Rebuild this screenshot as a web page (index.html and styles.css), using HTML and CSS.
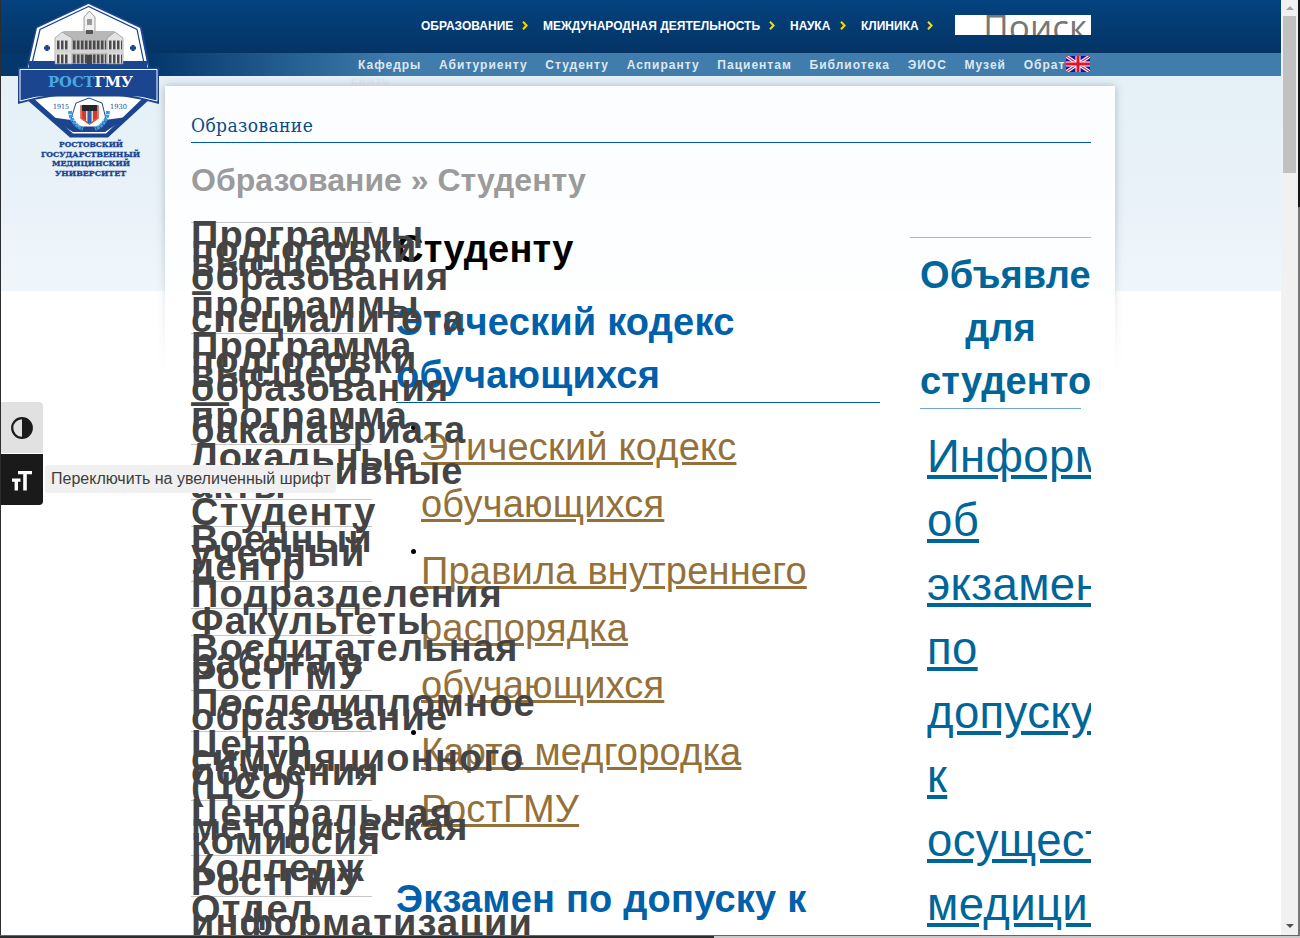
FILE: index.html
```html
<!DOCTYPE html>
<html lang="ru">
<head>
<meta charset="utf-8">
<title>Студенту</title>
<link rel="stylesheet" href="styles.css">
</head>
<body>
<div class="window">
  <div class="view">
    <header class="header">
      <nav class="primary">
        <a class="p1">ОБРАЗОВАНИЕ</a><svg class="chev" viewBox="0 0 6 9"><path d="M1 .7 4.6 4.5 1 8.3"/></svg>
        <a class="p2">МЕЖДУНАРОДНАЯ ДЕЯТЕЛЬНОСТЬ</a><svg class="chev" viewBox="0 0 6 9"><path d="M1 .7 4.6 4.5 1 8.3"/></svg>
        <a class="p3">НАУКА</a><svg class="chev" viewBox="0 0 6 9"><path d="M1 .7 4.6 4.5 1 8.3"/></svg>
        <a class="p4">КЛИНИКА</a><svg class="chev" viewBox="0 0 6 9"><path d="M1 .7 4.6 4.5 1 8.3"/></svg>
      </nav>
      <div class="search"><span>Поиск</span></div>
    </header>
    <div class="strip">
      <nav class="secondary">
        <a>Кафедры</a><a>Абитуриенту</a><a>Студенту</a><a>Аспиранту</a><a>Пациентам</a><a>Библиотека</a><a>ЭИОС</a><a>Музей</a><a>Обрат</a>
      </nav>
      <svg class="flag" viewBox="0 0 24 16"><rect width="24" height="16" fill="#1212a8"/><path d="M0 0 24 16M24 0 0 16" stroke="#fff" stroke-width="3.4"/><path d="M0 0 24 16M24 0 0 16" stroke="#e2203c" stroke-width="1.2"/><path d="M12 0V16M0 8H24" stroke="#fff" stroke-width="5"/><path d="M12 0V16M0 8H24" stroke="#e4102c" stroke-width="3"/></svg>
    </div>
    <div class="wrapped">связь</div>
    <svg class="logo" viewBox="0 0 144 180">
      <path d="M72.500 2 20 27 10 68H134L126 27Z" fill="#1b458f"/>
      <path d="M72.500 4 21 28 12 68H132L124 28Z" fill="#fff"/>
      <path d="M72.500 6.500 24 29.500 15 68H129L121 29.500Z" fill="#fff" stroke="#1b458f" stroke-width="1.200"/>
      <path d="M13 61H131V68H13Z" fill="#1b458f"/>
      <g>
        <path d="M68 17 73.500 11 79 17V33H68Z" fill="#f0f0f0" stroke="#777" stroke-width=".7"/>
        <path d="M71 19H76V25H71Z" fill="#999"/>
        <path d="M39 38 48 31H98L107 38V64H39Z" fill="#b8b8b8"/>
        <path d="M39 38 46 32 56 38V64H39ZM91 38 99 32 107 38V64H91Z" fill="#e2e2e2" stroke="#888" stroke-width=".6"/>
        <path d="M70 34H77V30H70Z" fill="#555"/>
        <path d="M41 45H52M57 45H90M93 45H106M41 59H52M57 59H90M93 59H106" stroke="#4b4b4b" stroke-width="9" stroke-dasharray="2.500 1.500"/>
        <path d="M39 51.500H107" stroke="#d4d4d4" stroke-width="3.500"/>
        <path d="M71 55H76V64H71Z" fill="#444"/>
        <path d="M31 45v6M28 48h6M117 45v6M114 48h6" stroke="#1b458f" stroke-width="3"/>
      </g>
      <path d="M9 98H135L92 137.500H54Z" fill="#1b458f"/>
      <path d="M16 97Q72 90 128 97L90 133.500H57Z" fill="#fff"/>
      <path d="M33 117Q72 124 111 117L89 132H57Z" fill="#1b458f"/>
      <path d="M73 98 60 103 55 119 62 127H83L90 119 86 103Z" fill="#fff" stroke="#1b458f"/>
      <path d="M54 111q1 13 13 18M92 111q-1 13-13 18" fill="none" stroke="#3f9bdc" stroke-width="4" stroke-dasharray="3 .7"/>
      <path d="M65 106H82V118L73.500 124 65 118Z" fill="#f0d8c8" stroke="#e05038" stroke-width="1.500"/>
      <path d="M66 105h15v6H66Z" fill="#252530"/><path d="M66 111h4v10l-4-3Z M77 111h4v7l-4 3Z" fill="#d43b2c"/><path d="M71.500 111h4v12h-4Z" fill="#2b62b3"/>
      <path d="M2 67.500H143V104Q72 84 2 104Z" fill="#1b458f"/>
      <path d="M4 69.500H141V101Q72 82 4 101Z" fill="none" stroke="#fff"/>
      <path d="M5 70H140V96.500H5Z" fill="#1b458f"/>
      <text x="32" y="87" class="brand" textLength="85" lengthAdjust="spacingAndGlyphs"><tspan fill="#48a8e4">РОСТ</tspan><tspan fill="#fff">ГМУ</tspan></text>
      <g class="years"><text x="37" y="109" textLength="16" lengthAdjust="spacingAndGlyphs">1915</text><text x="94" y="109" textLength="17" lengthAdjust="spacingAndGlyphs">1930</text></g>
      <g class="uni">
        <text x="43" y="146.500" textLength="64" lengthAdjust="spacingAndGlyphs">РОСТОВСКИЙ</text>
        <text x="25" y="156.500" textLength="99" lengthAdjust="spacingAndGlyphs">ГОСУДАРСТВЕННЫЙ</text>
        <text x="36" y="166" textLength="78" lengthAdjust="spacingAndGlyphs">МЕДИЦИНСКИЙ</text>
        <text x="39" y="176" textLength="71" lengthAdjust="spacingAndGlyphs">УНИВЕРСИТЕТ</text>
      </g>
    </svg>
    <div class="shade"></div>
    <main class="card">
      <div class="section">Образование</div>
      <div class="crumbs">Образование » Студенту</div>
      <div class="columns">
        <ul class="menu">
          <li>Программы<br>подготовки<br>высшего<br>образования<br>–<br>программы<br>специалитета</li>
          <li>Программа<br>подготовки<br>высшего<br>образования<br>—<br>программа<br>бакалавриата</li>
          <li>Локальные<br>нормативные<br>акты</li>
          <li>Студенту</li>
          <li>Военный<br>учебный<br>центр</li>
          <li>Подразделения</li>
          <li>Факультеты</li>
          <li>Воспитательная<br>работа в<br>РостГМУ</li>
          <li>Последипломное<br>образование</li>
          <li>Центр<br>симуляционного<br>обучения<br>(ЦСО)</li>
          <li>Центральная<br>методическая<br>комиссия</li>
          <li>Колледж<br>РостГМУ</li>
          <li>Отдел<br>информатизации</li>
        </ul>
        <section class="content">
          <h1>Студенту</h1>
          <h2 class="ruled">Этический кодекс<br>обучающихся</h2>
          <ul class="links">
            <li><a>Этический кодекс<br>обучающихся</a></li>
            <li><a>Правила внутреннего<br>распорядка<br>обучающихся</a></li>
            <li><a>Карта медгородка<br>РостГМУ</a></li>
          </ul>
          <h2>Экзамен по допуску к</h2>
        </section>
        <aside class="news">
          <h3>Объявления<br>для<br>студентов</h3>
          <a>Информация<br>об<br>экзамене<br>по<br>допуску<br>к<br>осуществлению<br>медицинской</a>
        </aside>
      </div>
    </main>
    <div class="access">
      <div class="tool"><svg viewBox="0 0 24 24"><circle cx="12" cy="12" r="9.800" fill="none" stroke="#1a1a1a" stroke-width="2.200"/><path d="M12 2A10 10 0 0 1 12 22Z" fill="#1a1a1a"/></svg></div>
      <div class="tool dark"><svg viewBox="0 0 24 24"><path d="M8 3H22V6.300H16.800V22.500H13.200V6.300H8ZM2 10.500H10.500V13.700H8V22.500H4.600V13.700H2Z" fill="#fff"/></svg></div>
    </div>
    <div class="tip">Переключить на увеличенный шрифт</div>
  </div>
  <div class="scroll"><i class="up"></i><b></b><i class="down"></i></div>
  <div class="edge"></div>
</div>
<div class="behind"><span></span></div>
</body>
</html>
```
FILE: styles.css
```css
* { box-sizing: border-box; }
body { margin: 0; width: 1300px; height: 938px; overflow: hidden; background: #2b2e30; font-family: "Liberation Sans", Arial, sans-serif; }
ul { list-style: none; margin: 0; padding: 0; }
h1, h2, h3 { margin: 0; }
.window { display: grid; grid-template-columns: 1280px 17px 2px; height: 935px; padding-left: 1px; background: #2b2e30; }
.view { position: relative; height: 935px; overflow: hidden; background: linear-gradient(#e5f0f7, #eaf2f9 130px, #f0f7fb 215px, #fff 215px) 0 76px / 100% 859px no-repeat #fff; }
.header { display: flex; height: 53px; padding: 15px 190px 0 420px; background: linear-gradient(#04427e, #043465); }
.primary { display: flex; align-items: flex-start; width: 534px; font-weight: bold; font-size: 12px; line-height: 21px; padding-top: 1px; color: #fff; white-space: nowrap; }
.chev { width: 6px; height: 9px; margin: 5px 15px 0 0; fill: none; stroke: #f5dc00; stroke-width: 2; }
.p1 { width: 101px; } .p2 { width: 226px; } .p3 { width: 50px; } .p4 { width: 66px; }
.search { width: 136px; height: 20px; overflow: hidden; background: #fff; color: #777; font: 35px/24px "Open Sans", sans-serif; text-align: right; padding-right: 4px; }
.strip { display: flex; align-items: flex-start; height: 23px; padding-left: 357px; background: linear-gradient(90deg, #04386d 150px, #407dad 400px); }
.secondary { display: flex; gap: 17.750px; width: 708px; padding-top: 1px; font-weight: bold; font-size: 12px; line-height: 23px; letter-spacing: 1px; color: #dfe8f0; white-space: nowrap; }
.flag { width: 24px; height: 16px; margin-top: 3px; }
.wrapped { height: 10px; overflow: hidden; padding-left: 350px; font-weight: bold; font-size: 12px; line-height: 11px; letter-spacing: 1px; color: #dfe8f0; }
.logo { position: absolute; left: 15px; top: 0; width: 144px; height: 180px; }
.brand { font: bold 15.500px "DejaVu Serif", serif; }
.years { font: 7px "DejaVu Serif", serif; fill: #1b458f; }
.uni { font: bold 8px "DejaVu Serif", serif; fill: #1b458f; stroke: #1b458f; stroke-width: .35; }
.shade { position: absolute; left: 154px; top: 76px; width: 970px; height: 310px; padding: 10px 10px 0; overflow: hidden; -webkit-mask-image: linear-gradient(#000 45%, transparent 97%); mask-image: linear-gradient(#000 45%, transparent 97%); }
.shade::before { content: ""; display: block; height: 320px; box-shadow: 0 0 8px rgba(60, 80, 90, .35); }
.card { position: relative; width: 950px; height: 849px; margin-left: 164px; padding: 28px 24px 0 26px; background: linear-gradient(#fcfdff, #fdfefe 205px, #fff 205px); }
.section { height: 29px; border-bottom: 1px solid #005a9c; color: #0a4a87; font: 19px/22px "DejaVu Serif Condensed", "DejaVu Serif", serif; font-stretch: condensed; letter-spacing: .4px; }
.crumbs { height: 79px; padding-top: 19px; color: #9b9b9b; font-weight: bold; font-size: 32px; line-height: 37px; }
.columns { display: grid; grid-template-columns: 181px 24px 484px 30px 181px; }
.menu { position: relative; z-index: 1; grid-column: 1; color: #444; font-weight: bold; font-size: 38px; line-height: 14px; letter-spacing: 1.200px; white-space: nowrap; }
.menu li { border-top: 1px solid #c6c6c6; padding: 5px 0 7px; }
.content { grid-column: 3; white-space: nowrap; }
.content h1, .content h2 { font-size: 38px; line-height: 53px; letter-spacing: .2px; }
.content h1 { padding-top: 1px; }
.content h2 { color: #0060aa; margin-top: 20px; }
.content .ruled { border-bottom: 1px solid #005a9c; height: 107px; }
.links { margin: 16px 0 35px 25px; display: grid; gap: 10px; color: #94703a; font-size: 38px; line-height: 57px; letter-spacing: .2px; }
.links li { position: relative; }
.links li::before { content: ""; position: absolute; left: -10px; top: 6px; width: 5px; height: 5px; border-radius: 50%; background: #000; }
.links a, .news a { text-decoration: underline; }
.links + h2 { margin-top: 0; }
.news { grid-column: 5; margin-top: 15px; height: 698px; border-top: 1px solid #b2b6b8; padding: 11px 10px 0; overflow: hidden; white-space: nowrap; color: #006699; }
.news h3 { height: 160px; border-bottom: 1px solid #6ca8d8; font-size: 38px; line-height: 53px; text-align: center; letter-spacing: .1px; }
.news a { display: block; margin: 16px 0 0 7px; font-size: 45.500px; line-height: 64px; letter-spacing: .350px; }
.access { position: absolute; left: 0; top: 402px; width: 42px; border-radius: 0 4px 4px 0; overflow: hidden; display: grid; gap: 1px; z-index: 2; }
.tool { height: 51px; display: grid; place-items: center; background: #e1e1e1; }
.tool svg { width: 24px; height: 24px; }
.dark { background: #1a1a1a; }
.tip { position: absolute; z-index: 3; left: 44px; top: 465px; width: 291px; height: 28px; border-radius: 3px; background: #f0f0f0; color: #3d3d3d; font-size: 16px; line-height: 28px; padding-left: 6px; white-space: nowrap; }
.scroll { display: flex; flex-direction: column; align-items: center; background: #f1f1f1; }
.scroll b { width: 13px; height: 157px; background: #c1c1c1; margin-top: 6px; }
.up { margin-top: 6px; border: 4px solid transparent; border-top: 0; border-bottom-color: #a3a3a3; }
.down { margin-top: auto; margin-bottom: 7px; border: 4px solid transparent; border-bottom: 0; border-top-color: #505050; }
.edge { background: linear-gradient(#161616 207px, #777 207px); }
.behind { height: 3px; padding-left: 714px; background: #2b2e30; border-top: 1px solid #666; }
.behind span { display: block; height: 2px; background: #c9c9c9; }
```
